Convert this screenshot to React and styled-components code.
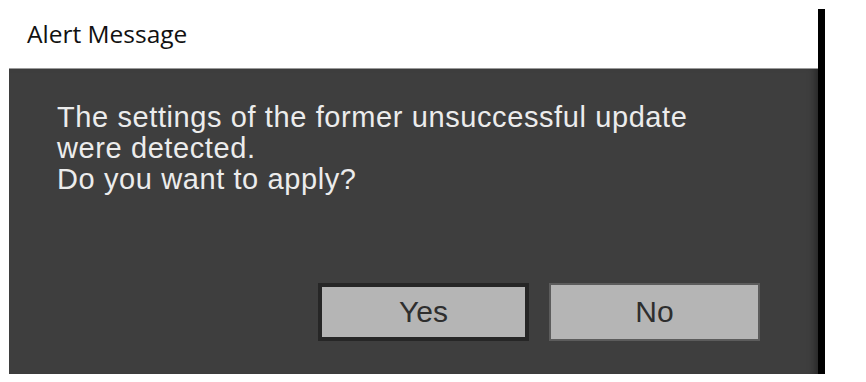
import React from "react";
import styled, { createGlobalStyle } from "styled-components";

const GlobalStyle = createGlobalStyle`
  html, body {
    margin: 0;
    padding: 0;
    background: #fff;
  }
`

const Page = styled.div`
  width: 866px;
  height: 382px;
  padding-top: 9px;
  padding-left: 9px;
  box-sizing: border-box;
  overflow: hidden;
`

const Dialog = styled.div`
  width: 809px;
  border-right: 7px solid #000;
  display: flex;
  flex-direction: column;
`

const TitleBar = styled.div`
  height: 60px;
  box-sizing: border-box;
  padding: 13px 0 0 18px;
  background: #fff;
  border-bottom: 1px solid #9a9a9a;
`

const Title = styled.span`
  font-family: "Open Sans", "Noto Sans", sans-serif;
  font-size: 24.5px;
  line-height: 24px;
  color: #111;
`

const Body = styled.div`
  height: 305px;
  box-sizing: border-box;
  background: #3e3e3e;
  box-shadow: inset -8px 0 8px -6px rgba(0, 0, 0, 0.45);
  padding: 33px 58px 0 48px;
  display: flex;
  flex-direction: column;
`

const Message = styled.p`
  margin: 0;
  font-family: "Liberation Sans", Arial, sans-serif;
  font-size: 29px;
  letter-spacing: 0.6px;
  line-height: 31px;
  color: #ececec;
`

const Buttons = styled.div`
  margin-top: auto;
  margin-bottom: 33px;
  display: flex;
  justify-content: flex-end;
  gap: 20px;
`

const Button = styled.button`
  width: 211px;
  height: 58px;
  box-sizing: border-box;
  background: #b5b5b5;
  border: ${props => props.$focused ? '4px solid #262626' : '2px solid #5c5c5c'};
  font-family: "Liberation Sans", Arial, sans-serif;
  font-size: 30px;
  color: #2e2e2e;
  padding: 0;
  cursor: pointer;
`

const App = () => {
  return (
    <Page>
      <GlobalStyle />
      <Dialog>
        <TitleBar>
          <Title>Alert Message</Title>
        </TitleBar>
        <Body>
          <Message>
            The settings of the former unsuccessful update<br />
            were detected.<br />
            Do you want to apply?
          </Message>
          <Buttons>
            <Button $focused>Yes</Button>
            <Button>No</Button>
          </Buttons>
        </Body>
      </Dialog>
    </Page>
  )
}

export default App;
